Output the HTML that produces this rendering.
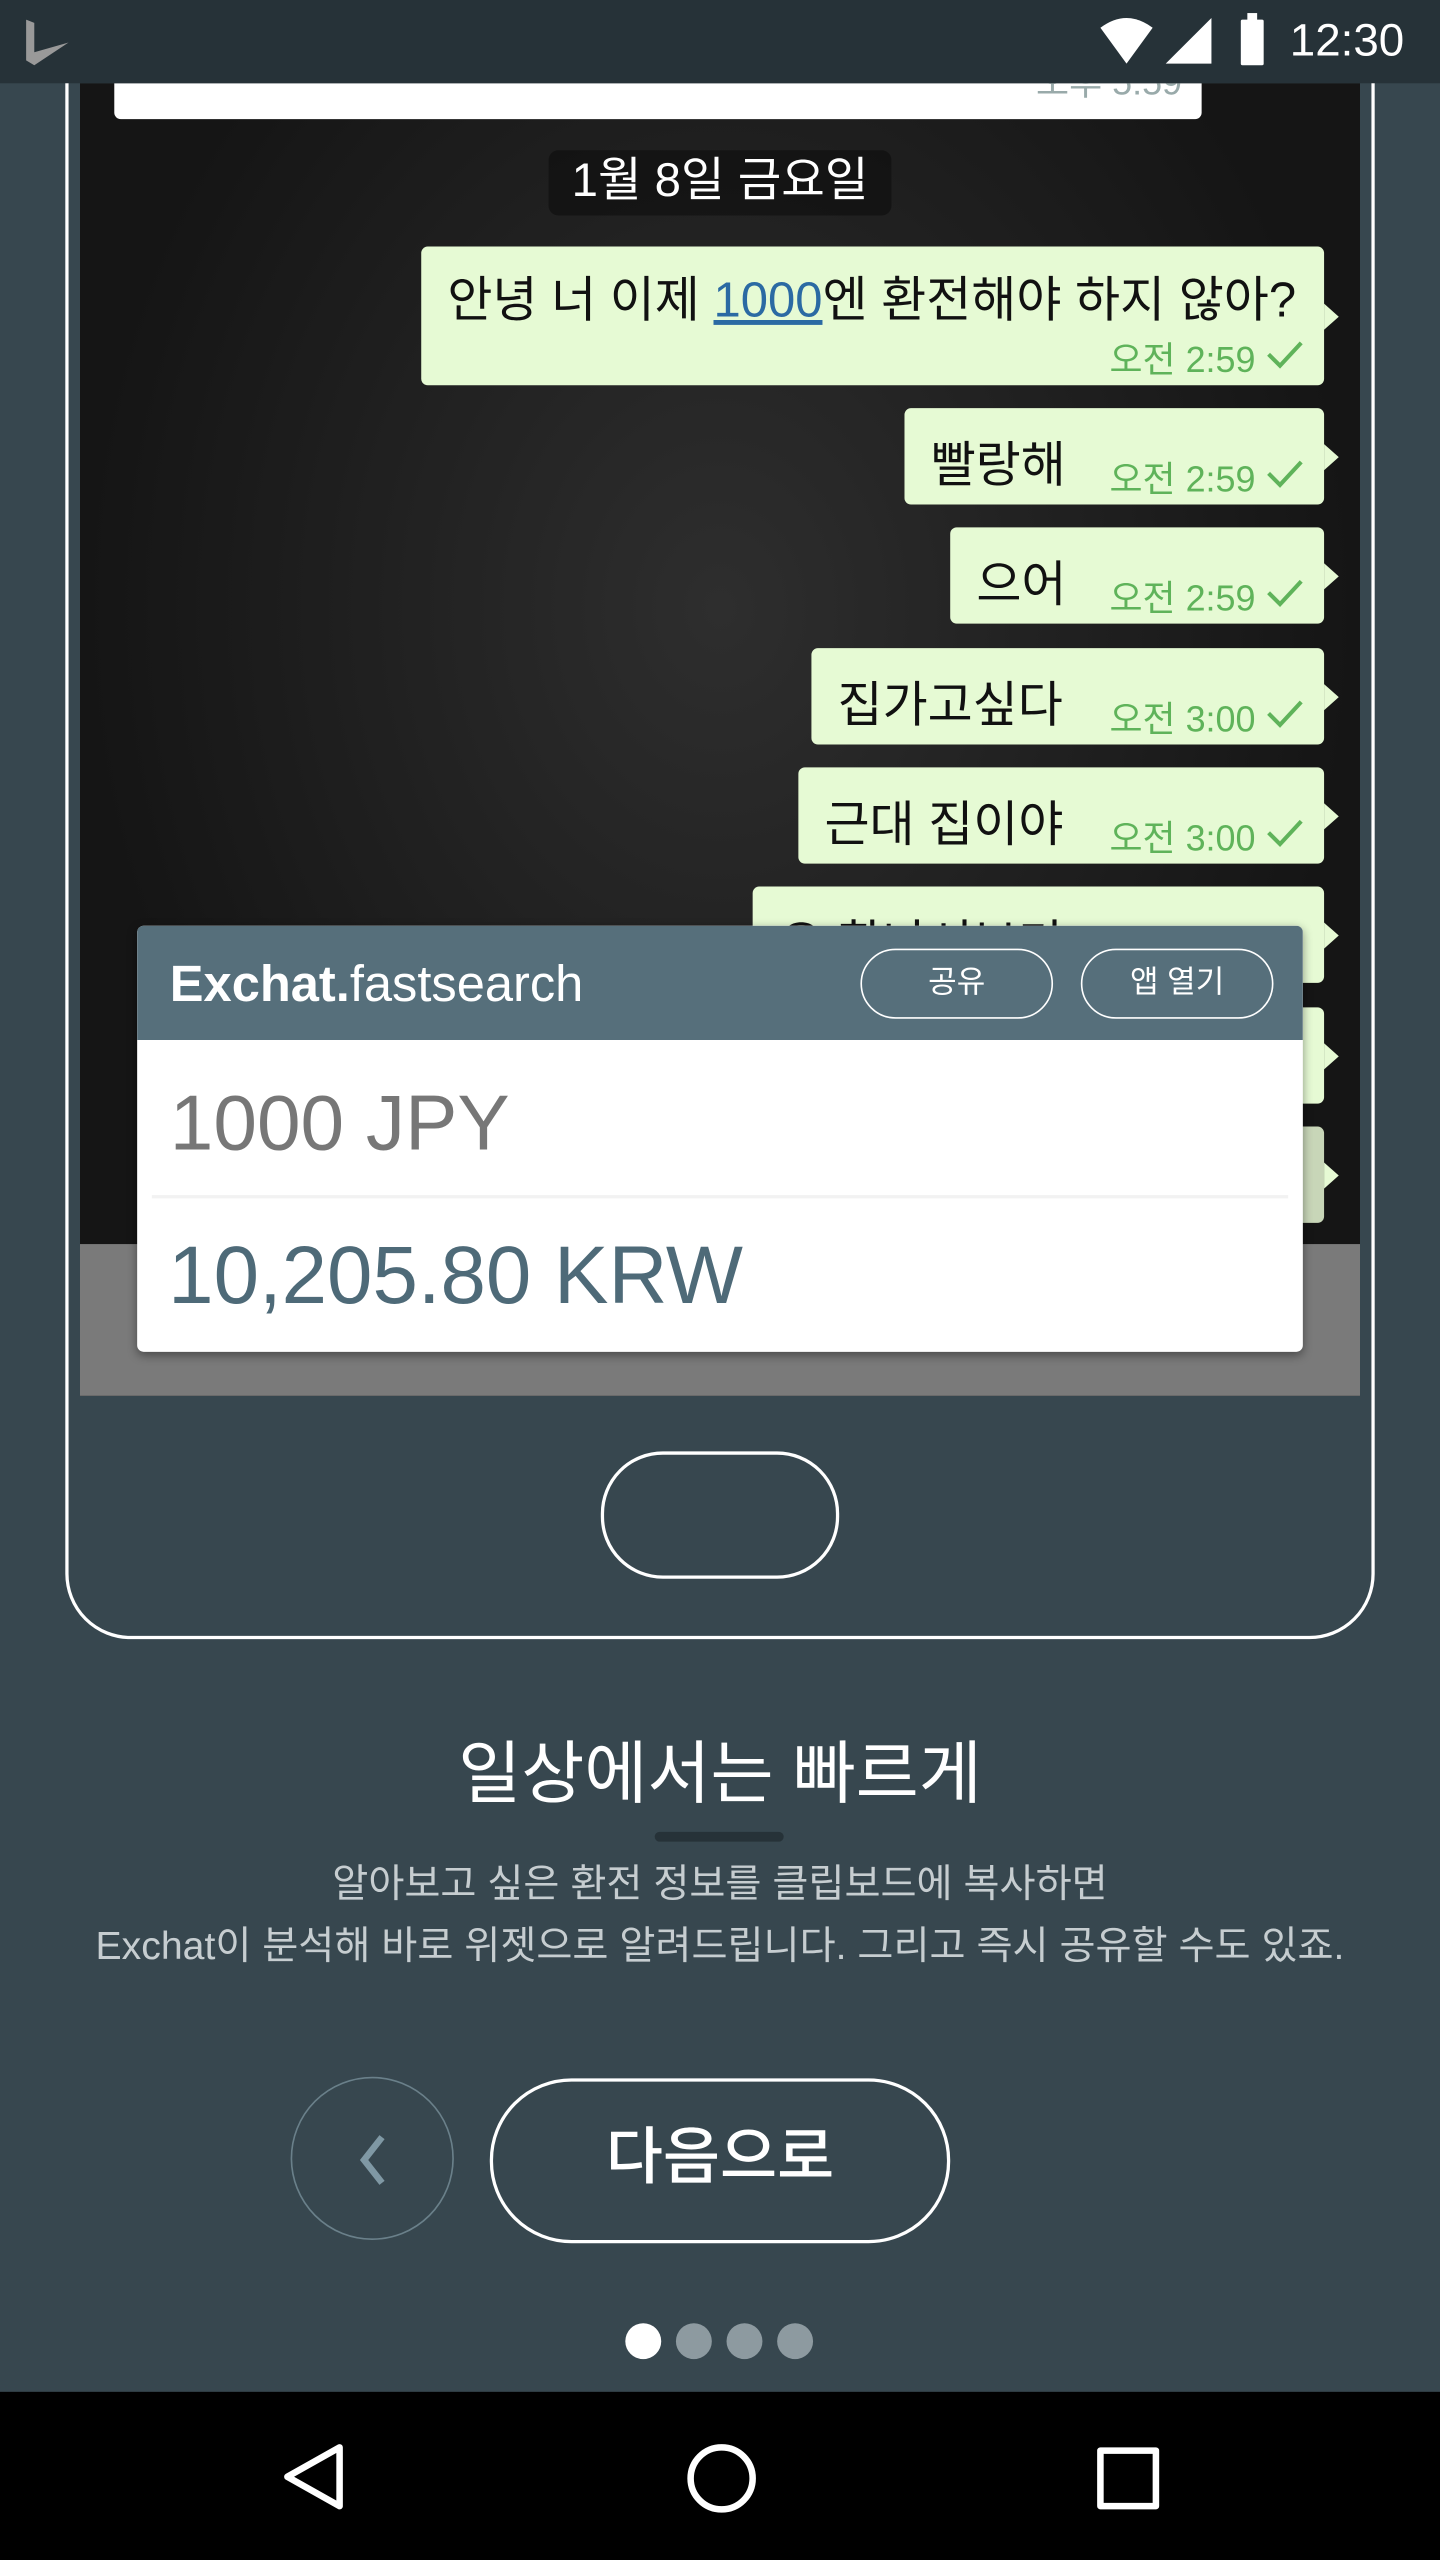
<!DOCTYPE html>
<html><head><meta charset="utf-8">
<style>
html,body{margin:0;padding:0;}
body{width:1440px;height:2560px;overflow:hidden;background:#37474f;font-family:"Liberation Sans","Noto Sans CJK KR",sans-serif;}
#w{position:absolute;left:0;top:0;width:882px;height:1568px;transform:scale(1.63265);transform-origin:0 0;}
.a{position:absolute;}
.b{position:absolute;background:#e6fad4;border-radius:4px;right:71px;}
.b:after{content:"";position:absolute;right:-9px;top:50%;margin-top:-8px;border-left:9px solid #e6fad4;border-top:8px solid transparent;border-bottom:8px solid transparent;}
.bt{position:absolute;left:16px;font-size:30px;color:#111;white-space:nowrap;}
.tm{position:absolute;right:42px;font-size:22px;color:#5fb35a;white-space:nowrap;}
.ck{position:absolute;right:12px;}
.btn{position:absolute;top:14px;height:41px;border:1.5px solid #fff;border-radius:22px;color:#fff;font-size:19px;text-align:center;line-height:41px;}
.dot{position:absolute;top:1423px;width:22px;height:22px;border-radius:50%;background:#8d9aa0;}
</style></head><body>
<div id="w">
<div class="a" style="left:40px;top:-40px;width:798px;height:1040px;border:2px solid #fff;border-radius:0 0 40px 40px;"></div>
<div class="a" style="left:49px;top:51px;width:784px;height:804px;background:radial-gradient(ellipse at 50% 40%,#2e2e2e,#151515 70%);overflow:hidden;">
  <div class="a" style="left:0;top:711px;width:784px;height:93px;background:#7a7a7a;border-bottom:2px solid #222;"></div>
  <div class="a" style="left:21px;top:-12px;width:666px;height:34px;background:#fff;border-radius:4px;"><span class="a" style="right:12px;top:-6px;font-size:22px;color:#9aa;">오후 5:59</span></div>
</div>
<div class="a" style="left:336px;top:92px;width:210px;height:40px;background:rgba(0,0,0,.35);border-radius:6px;color:#fff;font-size:29px;text-align:center;line-height:38px;">1월 8일 금요일</div>
<div class="b" style="left:258px;top:151px;height:85px;"><span class="bt" style="top:8px;">안녕 너 이제 <u style="color:#2b6aa3">1000</u>엔 환전해야 하지 않아?</span><span class="tm" style="top:52px;">오전 2:59</span><svg class="ck" style="top:56px" width="24" height="20" viewBox="0 0 24 20"><path d="M2 10 L9 17 L22 3" fill="none" stroke="#5fb35a" stroke-width="2.5"/></svg></div>
<div class="b" style="left:554px;top:250px;height:59px;"><span class="bt" style="top:10px;">빨랑해</span><span class="tm" style="top:26px;">오전 2:59</span><svg class="ck" style="top:30px" width="24" height="20" viewBox="0 0 24 20"><path d="M2 10 L9 17 L22 3" fill="none" stroke="#5fb35a" stroke-width="2.5"/></svg></div>
<div class="b" style="left:582px;top:323px;height:59px;"><span class="bt" style="top:10px;">으어</span><span class="tm" style="top:26px;">오전 2:59</span><svg class="ck" style="top:30px" width="24" height="20" viewBox="0 0 24 20"><path d="M2 10 L9 17 L22 3" fill="none" stroke="#5fb35a" stroke-width="2.5"/></svg></div>
<div class="b" style="left:497px;top:397px;height:59px;"><span class="bt" style="top:10px;">집가고싶다</span><span class="tm" style="top:26px;">오전 3:00</span><svg class="ck" style="top:30px" width="24" height="20" viewBox="0 0 24 20"><path d="M2 10 L9 17 L22 3" fill="none" stroke="#5fb35a" stroke-width="2.5"/></svg></div>
<div class="b" style="left:489px;top:470px;height:59px;"><span class="bt" style="top:10px;">근대 집이야</span><span class="tm" style="top:26px;">오전 3:00</span><svg class="ck" style="top:30px" width="24" height="20" viewBox="0 0 24 20"><path d="M2 10 L9 17 L22 3" fill="none" stroke="#5fb35a" stroke-width="2.5"/></svg></div>
<div class="b" style="left:461px;top:543px;height:59px;"><span class="bt" style="top:10px;">오 환나서보기</span></div>
<div class="b" style="left:700px;top:617px;height:59px;"></div>
<div class="b" style="left:700px;top:690px;height:59px;background:#c8d6b8;"></div>
<div class="a" style="left:84px;top:567px;width:714px;height:261px;background:#fff;border-radius:4px;overflow:hidden;box-shadow:0 2px 6px rgba(0,0,0,.4);">
  <div class="a" style="left:0;top:0;width:714px;height:70px;background:#566f7b;">
    <span class="a" style="left:20px;top:18px;font-size:31px;color:#fff;"><b>Exchat.</b>fastsearch</span>
    <div class="btn" style="left:443px;width:116px;">공유</div>
    <div class="btn" style="left:578px;width:116px;">앱 열기</div>
  </div>
  <div class="a" style="left:20px;top:94px;font-size:48px;color:#777;">1000 JPY</div>
  <div class="a" style="left:9px;top:165px;width:696px;height:2px;background:#f2f2f2;"></div>
  <div class="a" style="left:19px;top:185px;font-size:50px;color:#4e6a78;">10,205.80 KRW</div>
</div>
<div class="a" style="left:0;top:0;width:882px;height:51px;background:#263238;">
  <svg class="a" style="left:14px;top:12px" width="32" height="30" viewBox="0 0 32 30"><path d="M2 0 L7 2 V20 L28 14 L7 28 L2 25Z" fill="#999"/></svg>
  <svg class="a" style="left:672px;top:9px" width="74" height="32" viewBox="0 0 74 32"><path d="M2 8 Q18 -4 34 8 L18 30Z" fill="#fff"/><path d="M42 30 L70 30 L70 2Z" fill="#fff"/></svg>
  <div class="a" style="left:760px;top:12px;width:14px;height:28px;background:#fff;border-radius:1px;"></div>
  <div class="a" style="left:764px;top:8px;width:6px;height:5px;background:#fff;"></div>
  <span class="a" style="left:790px;top:9px;font-size:28px;color:#fff;">12:30</span>
</div>
<div class="a" style="left:368px;top:889px;width:142px;height:74px;border:2.5px solid #fff;border-radius:38px;"></div>
<div class="a" style="left:0;top:1053px;width:882px;text-align:center;font-size:42px;color:#fff;">일상에서는 빠르게</div>
<div class="a" style="left:401px;top:1122px;width:79px;height:6px;background:#263238;border-radius:3px;"></div>
<div class="a" style="left:0;top:1136px;width:882px;text-align:center;font-size:24px;line-height:38px;color:#c6cdd0;">알아보고 싶은 환전 정보를 클립보드에 복사하면<br>Exchat이 분석해 바로 위젯으로 알려드립니다. 그리고 즉시 공유할 수도 있죠.</div>
<div class="a" style="left:178px;top:1272px;width:98px;height:98px;border:1.5px solid #6a808a;border-radius:50%;"></div>
<svg class="a" style="left:216px;top:1306px" width="24" height="34" viewBox="0 0 24 34"><path d="M18 3 L7 17 L18 31" fill="none" stroke="#7f98a4" stroke-width="4"/></svg>
<div class="a" style="left:300px;top:1273px;width:278px;height:97px;border:2px solid #fff;border-radius:50px;color:#fff;font-size:38px;text-align:center;line-height:95px;font-weight:500;">다음으로</div>
<div class="dot" style="left:383px;background:#fff;"></div>
<div class="dot" style="left:414px;"></div>
<div class="dot" style="left:445px;"></div>
<div class="dot" style="left:476px;"></div>
<div class="a" style="left:0;top:1465px;width:882px;height:103px;background:#000;">
  <svg class="a" style="left:170px;top:30px" width="46" height="44" viewBox="0 0 46 44"><path d="M38 4 L6 22 L38 40Z" fill="none" stroke="#fff" stroke-width="4" stroke-linejoin="round"/></svg>
  <div class="a" style="left:421px;top:32px;width:34px;height:34px;border:4px solid #fff;border-radius:50%;"></div>
  <div class="a" style="left:672px;top:34px;width:30px;height:30px;border:4px solid #fff;border-radius:2px;"></div>
</div>
</div>
</body></html>
